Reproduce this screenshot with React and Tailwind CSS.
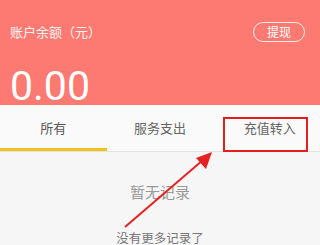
export default function App() {
  const font = { fontFamily: '"Noto Sans CJK SC", "Noto Sans", sans-serif' };
  return (
    <div className="relative w-[320px] h-[245px] overflow-hidden bg-[#f6f6f6]" style={font}>
      {/* header */}
      <div className="h-[105px] bg-[#fd7a73] px-[10px] pt-[20px]">
        <div className="flex items-start justify-between">
          <span className="text-[13px] leading-[20px] text-white/90 mt-[2px]">账户余额（元）</span>
          <span className="mr-[5px] mt-[2px] h-[20px] w-[52px] rounded-full border-[1.5px] border-white/85 text-white text-[12px] leading-[17px] text-center">提现</span>
        </div>
        <div className="mt-[22px] text-[41px] leading-[44px] text-white font-[Roboto]">0.00</div>
      </div>

      {/* tabs */}
      <div className="grid grid-cols-3 h-[47px] bg-[#fafafa] border-b border-[#e2e2e2]">
        <div className="relative flex items-center justify-center text-[13px] text-[#555]">
          所有
          <div className="absolute left-0 right-0 bottom-0 h-[3px] bg-[#f1c21b]" />
        </div>
        <div className="flex items-center justify-center text-[13px] text-[#666]">服务支出</div>
        <div className="flex items-center justify-center text-[13px] text-[#666] pl-[6px]">充值转入</div>
      </div>

      <div className="flex flex-col items-center">
        <div className="mt-[31px] text-[15px] leading-[18px] text-[#999]">暂无记录</div>
        <div className="mt-[29px] text-[12.5px] leading-[15px] text-[#777]">没有更多记录了</div>
      </div>

      {/* annotation */}
      <div className="absolute left-[223px] top-[117px] w-[85px] h-[35px] border-2 border-[#e51d1d]" />
      <svg className="absolute left-0 top-0" width="320" height="245">
        <line x1="125" y1="227" x2="203" y2="160" stroke="#e52222" strokeWidth="2" />
        <polygon points="212,152 196,158 206,169" fill="#e52222" />
      </svg>
    </div>
  );
}
